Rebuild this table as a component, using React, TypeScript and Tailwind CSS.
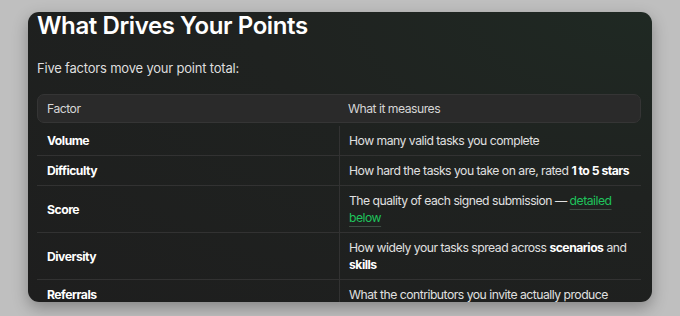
import React from "react";

const rows: { f: string; d: React.ReactNode }[] = [
  { f: "Volume", d: "How many valid tasks you complete" },
  {
    f: "Difficulty",
    d: (
      <>
        How hard the tasks you take on are, rated <b className="font-bold text-white">1 to 5 stars</b>
      </>
    ),
  },
  {
    f: "Score",
    d: (
      <>
        The quality of each signed submission —{" "}
        <a className="text-[#1ec45c] underline decoration-[#3d4d43] underline-offset-[4px]">detailed below</a>
      </>
    ),
  },
  {
    f: "Diversity",
    d: (
      <>
        How widely your tasks spread across <b className="font-bold text-white">scenarios</b> and{" "}
        <b className="font-bold text-white">skills</b>
      </>
    ),
  },
  { f: "Referrals", d: "What the contributors you invite actually produce" },
];

export default function App() {
  return (
    <div
      className="w-[680px] h-[316px] bg-[#bfbfbf] pl-[28px] pt-[12px]"
      style={{ fontFamily: "Inter, 'Noto Sans', sans-serif" }}
    >
      <div className="w-[624px] h-[290px] rounded-[11px] overflow-hidden bg-[radial-gradient(ellipse_at_top_right,#1f2923_0%,#1f2220_45%,#1e1e1e_100%)] shadow-[0_6px_16px_rgba(0,0,0,0.3)] pl-[9px] pr-[11px]">
        <h1 className="text-[24px] leading-[28px] font-semibold text-white tracking-[-0.4px]">What Drives Your Points</h1>
        <p className="mt-[18px] text-[13px] leading-[20px] text-[#dedede] tracking-[-0.2px]">Five factors move your point total:</p>
        <div className="mt-[16px] text-[12.2px] leading-[17px] tracking-[-0.5px]">
          <div className="grid grid-cols-2 h-[29px] items-center rounded-[7px] border border-[#353535] bg-[#2a2a2a] text-[#d6d6d6]">
            <div className="pl-[9px]">Factor</div>
            <div className="pl-[9px]">What it measures</div>
          </div>
          {rows.map((r, i) => (
            <div
              key={r.f}
              className={`grid grid-cols-2 border-b border-[#323232] ${i === 0 ? "pt-[3px]" : ""}`}
            >
              <div className="flex items-center pl-[10px] py-[6px] font-bold text-white">{r.f}</div>
              <div className="flex items-center border-l border-[#323232] pl-[9px] pr-[6px] py-[6px] text-[#e0e0e0]">
                <span>{r.d}</span>
              </div>
            </div>
          ))}
        </div>
      </div>
    </div>
  );
}
